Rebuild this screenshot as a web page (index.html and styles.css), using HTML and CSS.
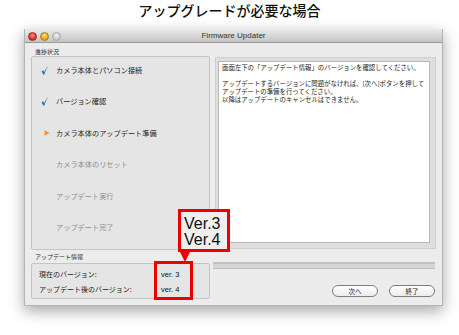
FILE: index.html
```html
<!DOCTYPE html>
<html lang="ja">
<head>
<meta charset="utf-8">
<link rel="stylesheet" href="styles.css">
</head>
<body>
<h1 class="page-title">アップグレードが必要な場合</h1>
<div class="window">
  <div class="titlebar">
    <div class="lights">
      <span class="light red"></span>
      <span class="light yellow"></span>
      <span class="light gray"></span>
    </div>
    <div class="win-title">Firmware Updater</div>
  </div>
  <div class="win-body">
    <div class="left-col">
      <div class="group-label first">進捗状況</div>
      <div class="steps">
        <div class="step done">
          <span class="mark"><svg width="8" height="10" viewBox="0 0 8 10"><path d="M0.6 6.2 L2.4 5.2 L3.1 7.4 C4.2 4.6 5.6 2.2 7.6 0.4 C5.9 2.6 4.6 5.4 3.4 9.4 L2.2 9.4 Z" fill="#2b6fae"/></svg></span>
          <span class="label">カメラ本体とパソコン接続</span>
        </div>
        <div class="step done">
          <span class="mark"><svg width="8" height="10" viewBox="0 0 8 10"><path d="M0.6 6.2 L2.4 5.2 L3.1 7.4 C4.2 4.6 5.6 2.2 7.6 0.4 C5.9 2.6 4.6 5.4 3.4 9.4 L2.2 9.4 Z" fill="#2b6fae"/></svg></span>
          <span class="label">バージョン確認</span>
        </div>
        <div class="step current">
          <span class="mark"><svg width="6" height="6" viewBox="0 0 6 6"><path d="M0.5 0.3 L5.6 3 L0.5 5.7 Z" fill="#f0962c"/></svg></span>
          <span class="label">カメラ本体のアップデート準備</span>
        </div>
        <div class="step pending">
          <span class="mark"></span>
          <span class="label">カメラ本体のリセット</span>
        </div>
        <div class="step pending">
          <span class="mark"></span>
          <span class="label">アップデート実行</span>
        </div>
        <div class="step pending">
          <span class="mark"></span>
          <span class="label">アップデート完了</span>
        </div>
      </div>
      <div class="group-label second">アップデート情報</div>
      <div class="info">
        <div class="info-row"><span class="info-key">現在のバージョン:</span><span class="info-val">ver. 3</span></div>
        <div class="info-row"><span class="info-key">アップデート後のバージョン:</span><span class="info-val">ver. 4</span></div>
      </div>
    </div>
    <div class="right-col">
      <div class="msg-frame">
        <div class="msg">
          <p>画面左下の「アップデート情報」のバージョンを確認してください。</p>
          <p class="gap">アップデートするバージョンに問題がなければ、[次へ]ボタンを押して</p>
          <p>アップデートの準備を行ってください。</p>
          <p>以降はアップデートのキャンセルはできません。</p>
        </div>
      </div>
      <div class="progress"></div>
      <div class="buttons">
        <button class="btn">次へ</button>
        <button class="btn">終了</button>
      </div>
    </div>
  </div>
  <div class="callout">
    <div class="callout-box">Ver.3<br>Ver.4</div>
    <div class="callout-arrow"></div>
  </div>
  <div class="highlight"></div>
</div>
</body>
</html>
```
FILE: styles.css
```css
* { box-sizing: border-box; }
html, body { margin: 0; padding: 0; background: #fff; }
body {
  width: 459px;
  height: 335px;
  overflow: hidden;
  font-family: "Noto Sans CJK JP", "Liberation Sans", sans-serif;
  color: #222;
}
.page-title {
  margin: 0;
  padding-top: 2px;
  height: 29px;
  font-size: 14px;
  line-height: 16px;
  font-weight: 500;
  text-align: center;
  color: #111;
}
.window {
  position: relative;
  margin-left: 24px;
  width: 419px;
  height: 277px;
  background: #ececec;
  border: 1px solid #b4b4b4;
  border-top: none;
  box-shadow: 0 5px 14px rgba(0,0,0,0.35);
  display: flex;
  flex-direction: column;
}
.titlebar {
  position: relative;
  height: 14px;
  flex: none;
  background: linear-gradient(#ebebeb, #c4c4c4);
  border-bottom: 1px solid #9a9a9a;
  border-radius: 3px 3px 0 0;
  display: flex;
  align-items: center;
  justify-content: center;
}
.lights {
  position: absolute;
  left: 3px;
  top: 3px;
  display: flex;
  gap: 3px;
}
.light {
  width: 9px;
  height: 9px;
  border-radius: 50%;
  display: block;
}
.light.red { background: radial-gradient(circle at 50% 35%, #ff8a80, #d42a1e 70%); border: 1px solid #a0261c; }
.light.yellow { background: radial-gradient(circle at 50% 35%, #ffe08a, #e89a12 70%); border: 1px solid #b07a18; }
.light.gray { background: radial-gradient(circle at 50% 35%, #f2f2f2, #c6c6c6 70%); border: 1px solid #a8a8a8; }
.win-title {
  font-family: "Liberation Sans", sans-serif;
  font-size: 8px;
  color: #333;
  line-height: 14px;
}
.win-body {
  flex: 1;
  display: flex;
  gap: 5px;
  padding: 0 6px 0 6px;
}
.left-col {
  width: 179px;
  display: flex;
  flex-direction: column;
}
.group-label {
  font-size: 6px;
  color: #333;
  line-height: 8px;
  padding-left: 4px;
}
.group-label.first { margin-top: 5px; height: 8px; }
.group-label.second { height: 13px; padding-top: 3px; }
.steps {
  height: 194px;
  background: #e5e5e5;
  border: 1px solid #c4c4c4;
  border-radius: 2px;
  padding-top: 5px;
  display: flex;
  flex-direction: column;
  gap: 16.6px;
}
.step {
  height: 15px;
  display: flex;
  align-items: center;
}
.mark {
  width: 24px;
  padding-left: 9px;
  display: flex;
  align-items: center;
}
.step.current .mark { padding-left: 12px; }
.label {
  font-size: 7.2px;
  line-height: 10px;
  white-space: nowrap;
}
.step.done .label, .step.current .label { color: #1c1c1c; }
.step.pending .label { color: #8e8e8e; }
.info {
  height: 36px;
  background: #e5e5e5;
  border: 1px solid #c4c4c4;
  border-radius: 2px;
  padding: 5px 0 0 7px;
  display: flex;
  flex-direction: column;
  gap: 5px;
}
.info-row {
  display: flex;
  align-items: center;
  height: 10px;
}
.info-key {
  width: 122px;
  font-size: 7px;
  color: #1c1c1c;
  white-space: nowrap;
}
.info-val {
  font-family: "Liberation Sans", sans-serif;
  font-size: 7.5px;
  color: #111;
}
.right-col {
  flex: 1;
  display: flex;
  flex-direction: column;
}
.msg-frame {
  margin-top: 14px;
  height: 192px;
  background: #dedede;
  border: 1px solid #cfcfcf;
  padding: 3px 5px 5px 2px;
}
.msg {
  height: 100%;
  background: #fff;
  border: 1px solid #b8b8b8;
  padding: 2px 3px;
}
.msg p {
  margin: 0;
  height: 8px;
  font-size: 6.4px;
  line-height: 8px;
  color: #222;
  white-space: nowrap;
}
.msg p.gap { margin-top: 8px; }
.progress {
  margin-top: 13px;
  height: 7px;
  background: #d6d6d6;
  border-top: 2px solid #c2c2c2;
  border-bottom: 1px solid #bcbcbc;
  margin-right: 1px;
  margin-left: -2px;
}
.buttons {
  margin-top: 16px;
  display: flex;
  justify-content: flex-end;
  gap: 11px;
  padding-right: 1px;
}
.btn {
  width: 46px;
  height: 12px;
  padding: 0;
  border: 1px solid #7d7d7d;
  border-radius: 6px;
  background: linear-gradient(#ffffff, #ececec);
  font-family: "Noto Sans CJK JP", sans-serif;
  font-size: 6.5px;
  line-height: 10px;
  color: #222;
}
.callout {
  position: absolute;
  left: 153px;
  top: 180px;
  display: flex;
  flex-direction: column;
  align-items: flex-start;
}
.callout-box {
  width: 52px;
  height: 43px;
  border: 3px solid #ee0000;
  background: #efefef;
  font-family: "Liberation Sans", sans-serif;
  font-size: 16px;
  line-height: 16px;
  color: #111;
  padding: 4px 0 0 3px;
}
.callout-arrow {
  margin-left: 2px;
  width: 0;
  height: 0;
  border-left: 5px solid transparent;
  border-right: 5px solid transparent;
  border-top: 10px solid #ee0000;
}
.highlight {
  position: absolute;
  left: 129px;
  top: 232px;
  width: 39px;
  height: 39px;
  border: 3px solid #ee0000;
}
```
